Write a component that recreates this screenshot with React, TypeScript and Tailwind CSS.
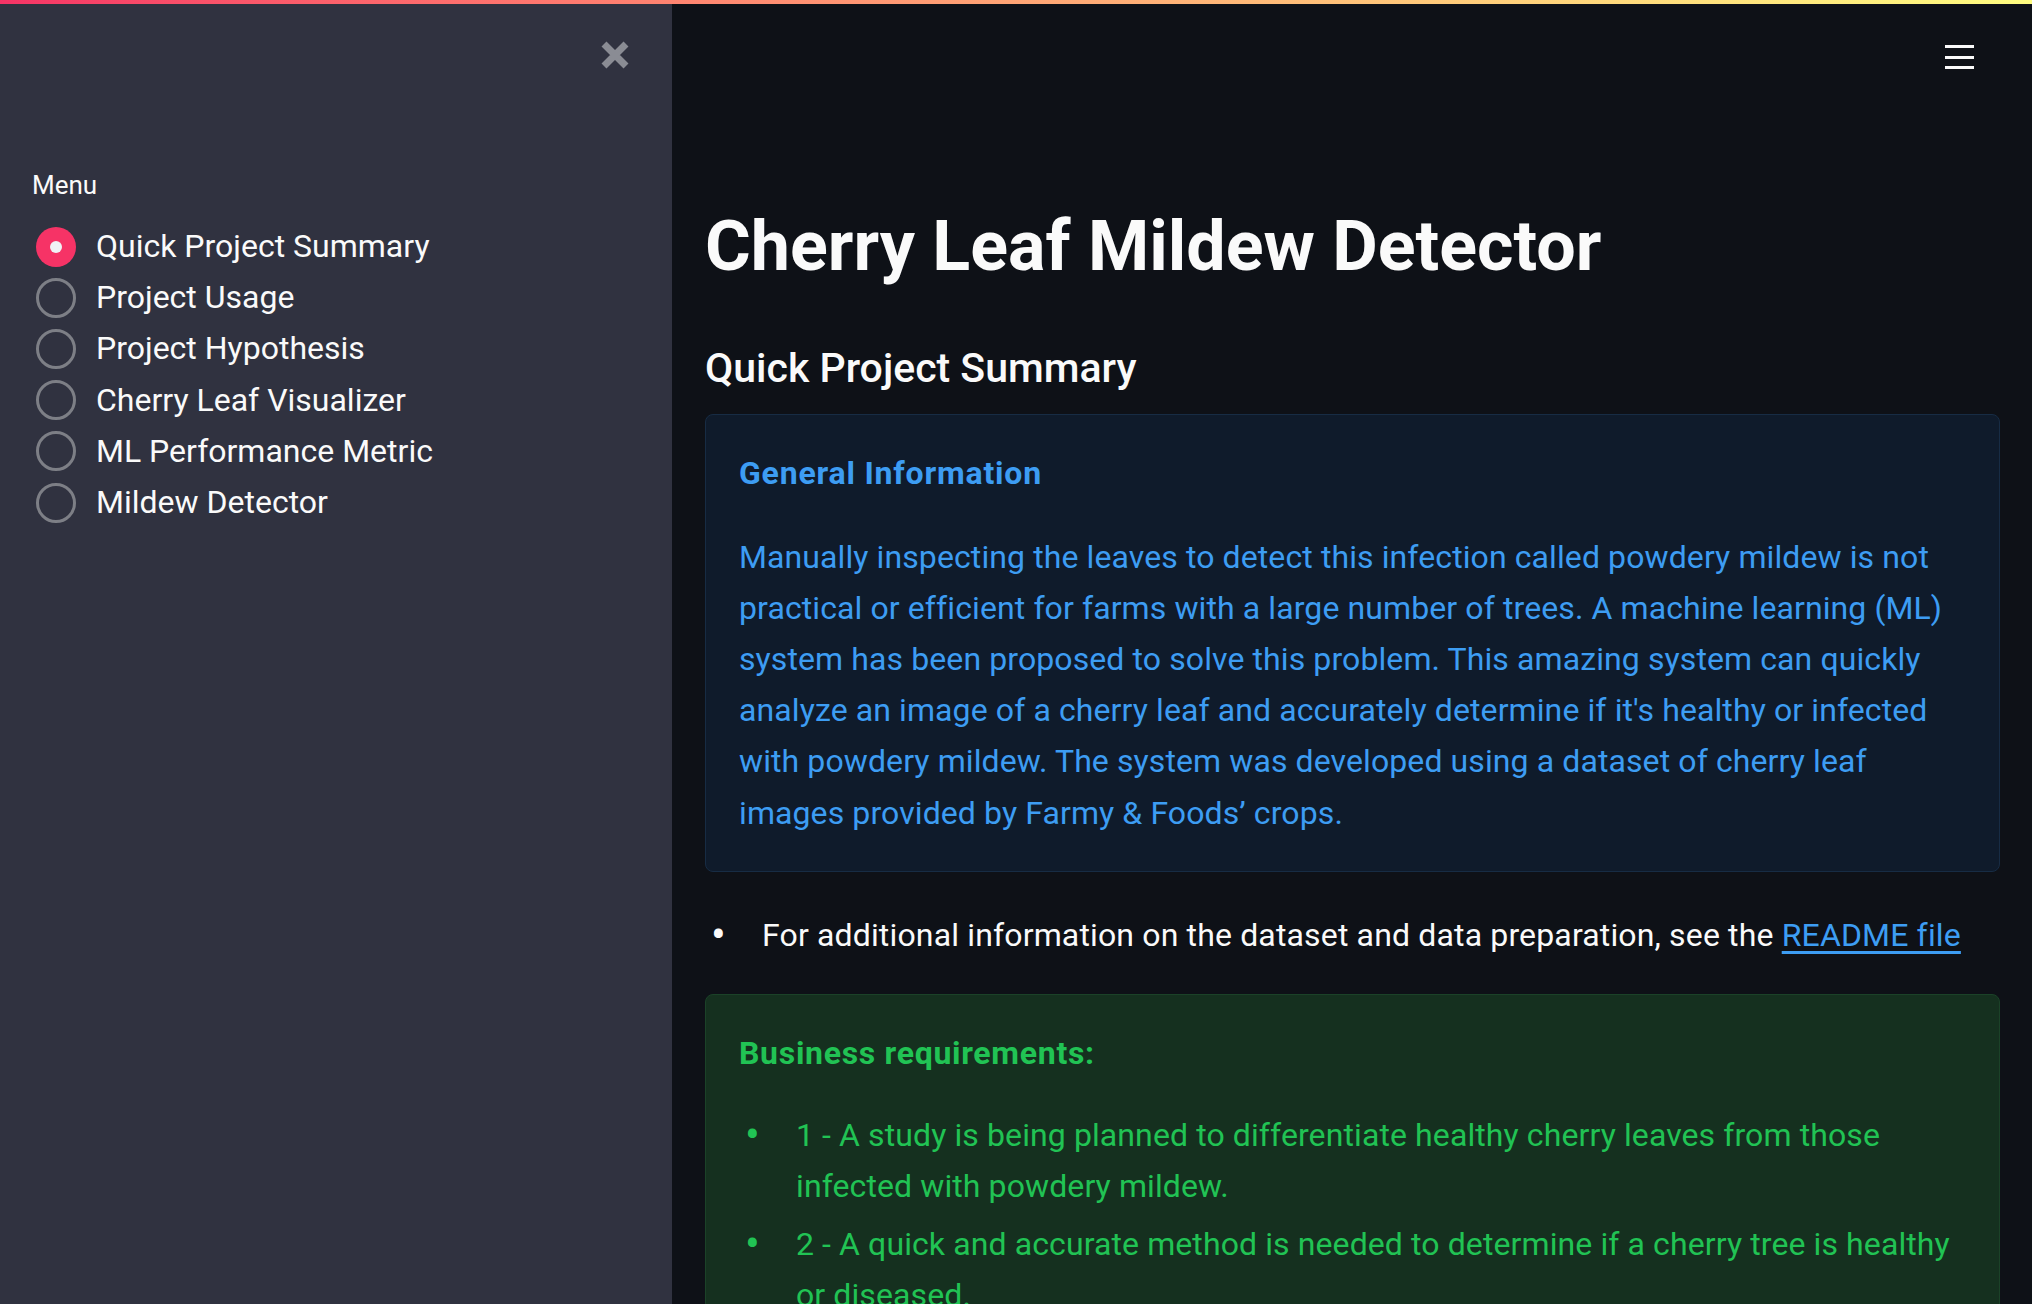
import { ReactNode } from 'react'

const pages = [
  'Quick Project Summary',
  'Project Usage',
  'Project Hypothesis',
  'Cherry Leaf Visualizer',
  'ML Performance Metric',
  'Mildew Detector',
]

function RadioItem({ label, checked }: { label: string; checked?: boolean }) {
  return (
    <label className="flex items-center h-[51.2px] gap-[20px]">
      {checked ? (
        <span className="w-[40px] h-[40px] rounded-full bg-[#f63366] flex items-center justify-center">
          <span className="w-[12px] h-[12px] rounded-full bg-[#f0f2f6]" />
        </span>
      ) : (
        <span className="w-[40px] h-[40px] rounded-full border-[3px] border-[#7d7f86]" />
      )}
      <span className="text-[32px] leading-[51.2px] text-[#fafafa]">{label}</span>
    </label>
  )
}

function Sidebar() {
  return (
    <aside className="w-[672px] h-full shrink-0 bg-[#303240] flex flex-col">
      {/* Close button */}
      <div className="flex justify-end pt-[41px] pr-[42px]">
        <svg width="30" height="28" viewBox="0 0 30 28">
          <path d="M4 3 L26 25 M26 3 L4 25" stroke="#8a8c94" strokeWidth="7" strokeLinecap="butt" />
        </svg>
      </div>

      <div className="pl-[32px] mt-[98px]">
        <div className="text-[26px] leading-[36px] text-[#fafafa]">Menu</div>
        <div className="mt-[18px] pl-[4px] flex flex-col">
          {pages.map((p, i) => (
            <RadioItem key={p} label={p} checked={i === 0} />
          ))}
        </div>
      </div>
    </aside>
  )
}

function Alert({ tone, children }: { tone: 'info' | 'success'; children: ReactNode }) {
  const styles =
    tone === 'info'
      ? 'bg-[#0f1b2b] border-[#172c44] text-[#3d9df3]'
      : 'bg-[#15301f] border-[#1b4228] text-[#21c354]'
  return (
    <div className={`rounded-[8px] border px-[33px] pt-[33px] pb-[32px] ${styles}`}>{children}</div>
  )
}

function Bullet() {
  return <span className="w-[57px] pl-[6px] shrink-0 text-[44px] leading-[51.2px]">•</span>
}

export default function App() {
  return (
    <div className="relative w-[2032px] h-[1304px] overflow-hidden flex bg-[#0e1117] font-['Roboto',sans-serif] text-[#fafafa]">
      {/* Top decoration */}
      <div className="absolute top-0 left-0 right-0 h-[4px] bg-gradient-to-r from-[#f63366] to-[#fffd80] z-10" />

      <Sidebar />

      <main className="flex-1 h-full flex flex-col">
        {/* Header */}
        <div className="flex justify-end pt-[45px] pr-[58px]">
          <div className="flex flex-col gap-[7.5px]">
            <span className="block w-[29px] h-[3px] bg-[#fafafa]" />
            <span className="block w-[29px] h-[3px] bg-[#fafafa]" />
            <span className="block w-[29px] h-[3px] bg-[#fafafa]" />
          </div>
        </div>

        <div className="pl-[33px] pr-[32px] mt-[134px]">
          <h1 className="text-[70px] leading-[86.4px] font-bold">Cherry Leaf Mildew Detector</h1>
          <h3 className="mt-[55px] text-[41px] leading-[48px] font-medium">Quick Project Summary</h3>

          <div className="mt-[22px]">
            <Alert tone="info">
              <div className="text-[32px] leading-[51.2px] font-bold tracking-[0.8px]">General Information</div>
              <p className="mt-[32px] text-[32px] leading-[51.2px] tracking-[0.1px]">
                Manually inspecting the leaves to detect this infection called powdery mildew is not
                practical or efficient for farms with a large number of trees. A machine learning (ML)
                system has been proposed to solve this problem. This amazing system can quickly
                analyze an image of a cherry leaf and accurately determine if it's healthy or infected
                with powdery mildew. The system was developed using a dataset of cherry leaf images
                provided by Farmy &amp; Foods’ crops.
              </p>
            </Alert>
          </div>

          <ul className="mt-[38px] mb-[33px]">
            <li className="flex text-[32px] leading-[51.2px] tracking-[0.15px]">
              <Bullet />
              <span>
                For additional information on the dataset and data preparation, see the{' '}
                <a className="text-[#3d9df3] underline underline-offset-[5px] decoration-[3px]">README file</a>
              </span>
            </li>
          </ul>

          <Alert tone="success">
            <div className="text-[32px] leading-[51.2px] font-bold tracking-[0.7px]">Business requirements:</div>
            <ul className="mt-[31px] text-[32px] leading-[51.2px] tracking-[0.1px]">
              <li className="flex">
                <Bullet />
                <span>
                  1 - A study is being planned to differentiate healthy cherry leaves from those infected
                  with powdery mildew.
                </span>
              </li>
              <li className="flex mt-[6px]">
                <Bullet />
                <span>
                  2 - A quick and accurate method is needed to determine if a cherry tree is healthy or
                  diseased.
                </span>
              </li>
            </ul>
          </Alert>
        </div>
      </main>
    </div>
  )
}
